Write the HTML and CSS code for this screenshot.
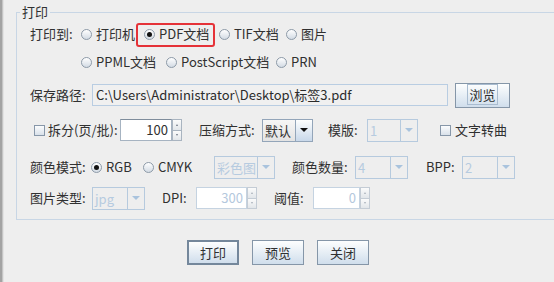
FILE: index.html
```html
<!DOCTYPE html>
<html>
<head>
    <meta charset="utf-8">
    <link rel="stylesheet" href="styles.css">
</head>
<body>
    <div class="window">
        <div class="edge"></div>
        <div class="main">
            <fieldset class="group">
                <legend>打印</legend>

                <div class="row row-target">
                    <span>打印到:</span>
                    <label class="opt"><span class="radio"></span>打印机</label>
                    <label class="opt marked"><span class="radio on"></span>PDF文档</label>
                    <label class="opt"><span class="radio"></span>TIF文档</label>
                    <label class="opt"><span class="radio"></span>图片</label>
                </div>

                <div class="row row-target2">
                    <span></span>
                    <label class="opt"><span class="radio"></span>PPML文档</label>
                    <label class="opt"><span class="radio"></span>PostScript文档</label>
                    <label class="opt"><span class="radio"></span>PRN</label>
                </div>

                <div class="row row-path">
                    <span>保存路径:</span>
                    <div class="field">C:\Users\Administrator\Desktop\标签3.pdf</div>
                    <button class="btn"><span class="focus">浏览</span></button>
                </div>

                <div class="row row-split">
                    <label class="opt check-opt"><span class="check"></span>拆分(页/批):</label>
                    <div class="spin">
                        <span class="spin-val">100</span>
                        <span class="spin-btns"><i class="up"></i><i class="down"></i></span>
                    </div>
                    <span>压缩方式:</span>
                    <div class="combo narrow">
                        <span class="combo-val">默认</span>
                        <span class="combo-arrow"></span>
                    </div>
                    <span>模版:</span>
                    <div class="combo narrow off">
                        <span class="combo-val">1</span>
                        <span class="combo-arrow"></span>
                    </div>
                    <label class="opt"><span class="check"></span>文字转曲</label>
                </div>

                <div class="row row-color">
                    <span>颜色模式:</span>
                    <label class="opt"><span class="radio on"></span>RGB</label>
                    <label class="opt"><span class="radio"></span>CMYK</label>
                    <div class="combo wide off">
                        <span class="combo-val">彩色图</span>
                        <span class="combo-arrow"></span>
                    </div>
                    <span>颜色数量:</span>
                    <div class="combo off">
                        <span class="combo-val">4</span>
                        <span class="combo-arrow"></span>
                    </div>
                    <span>BPP:</span>
                    <div class="combo off">
                        <span class="combo-val">2</span>
                        <span class="combo-arrow"></span>
                    </div>
                </div>

                <div class="row row-image">
                    <span>图片类型:</span>
                    <div class="combo off">
                        <span class="combo-val">jpg</span>
                        <span class="combo-arrow"></span>
                    </div>
                    <span>DPI:</span>
                    <div class="spin off">
                        <span class="spin-val">300</span>
                        <span class="spin-btns"><i class="up"></i><i class="down"></i></span>
                    </div>
                    <span>阈值:</span>
                    <div class="spin small off">
                        <span class="spin-val">0</span>
                        <span class="spin-btns"><i class="up"></i><i class="down"></i></span>
                    </div>
                </div>
            </fieldset>

            <div class="actions">
                <button class="btn default">打印</button>
                <button class="btn">预览</button>
                <button class="btn">关闭</button>
            </div>
        </div>
    </div>
</body>
</html>
```

FILE: styles.css
```css
body {
    margin: 0;
    background-color: #eeeeee;
    font-family: "Noto Sans CJK SC", "Noto Sans", sans-serif;
    font-size: 13px;
    color: #303030;
    overflow: hidden;
}

.window {
    display: flex;
    height: 282px;
}

.edge {
    width: 4px;
    flex-shrink: 0;
    background: linear-gradient(to right, #a3a3a3 0, #a3a3a3 2px, #c4c4c4 2px, #c4c4c4 3px, #e2e2e2 3px);
}

.main {
    flex: 1;
    min-width: 0;
}

.group {
    margin: 4px 0 0 12px;
    padding: 0 0 9px 0;
    border: 1px solid #c8d6e5;
    width: 560px;
    box-sizing: border-box;
    min-width: 0;
}

.group legend {
    margin-left: 3px;
    padding: 0 2px;
    line-height: 16px;
}

.row {
    display: grid;
    align-items: center;
    margin-left: 13px;
    height: 24px;
    line-height: 16px;
    white-space: nowrap;
}

.row-target {
    margin-top: 2px;
    grid-template-columns: 51px 63px 75px 67px auto;
}

.row-target2 {
    margin-top: 4px;
    grid-template-columns: 51px 85px 110px auto;
}

.row-path {
    margin-top: 8px;
    height: 26px;
    grid-template-columns: 62px 363px 55px;
}

.row-split {
    margin-top: 10px;
    grid-template-columns: 90px 79px 63px 66px 39px 73px auto;
}

.row-color {
    margin-top: 13px;
    grid-template-columns: 61px 52px 71px 78px 63px 71px 36px auto;
}

.row-image {
    margin-top: 7px;
    grid-template-columns: 62px 70px 34px 78px 39px auto;
}

/* radio buttons and check boxes */

.opt {
    display: flex;
    align-items: center;
    gap: 4px;
    position: relative;
}

.check-opt {
    padding-left: 4px;
    gap: 3px;
}

.radio {
    width: 11px;
    height: 11px;
    box-sizing: border-box;
    border: 1px solid #8d9aa8;
    border-radius: 50%;
    background: linear-gradient(to bottom, #ffffff, #d3dbe4);
    position: relative;
    flex-shrink: 0;
}

.radio.on::after {
    content: "";
    position: absolute;
    left: 2px;
    top: 2px;
    width: 5px;
    height: 5px;
    border-radius: 50%;
    background-color: #111;
}

.check {
    width: 11px;
    height: 11px;
    box-sizing: border-box;
    border: 1px solid #8797a9;
    background: linear-gradient(to bottom, #fbfcfd, #d9e1ea);
    flex-shrink: 0;
}

.marked::after {
    content: "";
    position: absolute;
    left: -8px;
    top: 50%;
    margin-top: -11px;
    width: 79px;
    height: 24px;
    box-sizing: border-box;
    border: 2px solid #e53238;
    border-radius: 3px;
}

/* path field */

.field {
    width: 356px;
    height: 22px;
    box-sizing: border-box;
    border: 1px solid #b9cde2;
    background-color: #f0f0f0;
    padding: 2px 3px;
    color: #2b2b2b;
    line-height: 16px;
    overflow: hidden;
}

/* buttons */

.btn {
    width: 55px;
    height: 25px;
    padding: 0;
    border: 1px solid #8596a8;
    background: linear-gradient(to bottom, #fdfefe, #d0deec);
    font-family: inherit;
    font-size: 13px;
    color: #303030;
    line-height: 16px;
}

.focus {
    border: 1px solid #a9bcd0;
    padding: 0 1px;
}

.actions {
    display: flex;
    justify-content: center;
    gap: 13px;
    margin-top: 20px;
    padding-right: 2px;
}

.actions .btn {
    width: 52px;
}

.btn.default {
    border: 2px solid #74879b;
}

/* combo boxes */

.combo {
    display: flex;
    width: 53px;
    height: 23px;
    box-sizing: border-box;
    border: 1px solid #93a5b9;
}

.combo.narrow {
    width: 51px;
}

.combo.wide {
    width: 61px;
}

.combo-val {
    flex: 1;
    padding-left: 2px;
    line-height: 21px;
    background: linear-gradient(to bottom, #f6f6f6, #e3e3e3);
    overflow: hidden;
}

.combo-arrow {
    width: 16px;
    border-left: 1px solid #93a5b9;
    background: linear-gradient(to bottom, #fdfefe, #c8d8ea);
    display: flex;
    align-items: center;
    justify-content: center;
}

.combo-arrow::before {
    content: "";
    border-left: 4px solid transparent;
    border-right: 4px solid transparent;
    border-top: 4px solid #111;
}

.combo.off {
    border-color: #b6cade;
}

.combo.off .combo-val {
    background: #eeeeee;
    color: #b6cbe0;
}

.combo.off .combo-arrow {
    border-left-color: #b6cade;
    background: #eeeeee;
}

.combo.off .combo-arrow::before {
    border-top-color: #a9c3dd;
}

/* spinners */

.spin {
    display: flex;
    width: 62px;
    height: 22px;
}

.spin.off {
    width: 61px;
}

.spin.small {
    width: 57px;
}

.spin-val {
    flex: 1;
    background-color: #ffffff;
    border: 1px solid #a6b3c1;
    border-top-color: #7f8d9c;
    text-align: right;
    padding-right: 3px;
    line-height: 20px;
}

.spin.off .spin-val {
    border-color: #c5d3e1;
    color: #b4c8dd;
}

.spin-btns {
    width: 10px;
    display: flex;
    flex-direction: column;
}

.spin-btns i {
    flex: 1;
    border: 1px solid #a9b4c0;
    background: linear-gradient(to bottom, #fbfbfb, #e2e6ea);
    display: flex;
    align-items: center;
    justify-content: center;
}

.spin-btns i + i {
    border-top: none;
}

.spin-btns .up::before {
    content: "";
    border-left: 1px solid transparent;
    border-right: 1px solid transparent;
    border-bottom: 2px solid #6b7682;
}

.spin-btns .down::before {
    content: "";
    border-left: 1px solid transparent;
    border-right: 1px solid transparent;
    border-top: 2px solid #6b7682;
}

.spin.off .spin-btns i {
    border-color: #c4ccd5;
}

.spin.off .spin-btns i::before {
    border-top-color: #a8b0b9;
    border-bottom-color: #a8b0b9;
}
```
